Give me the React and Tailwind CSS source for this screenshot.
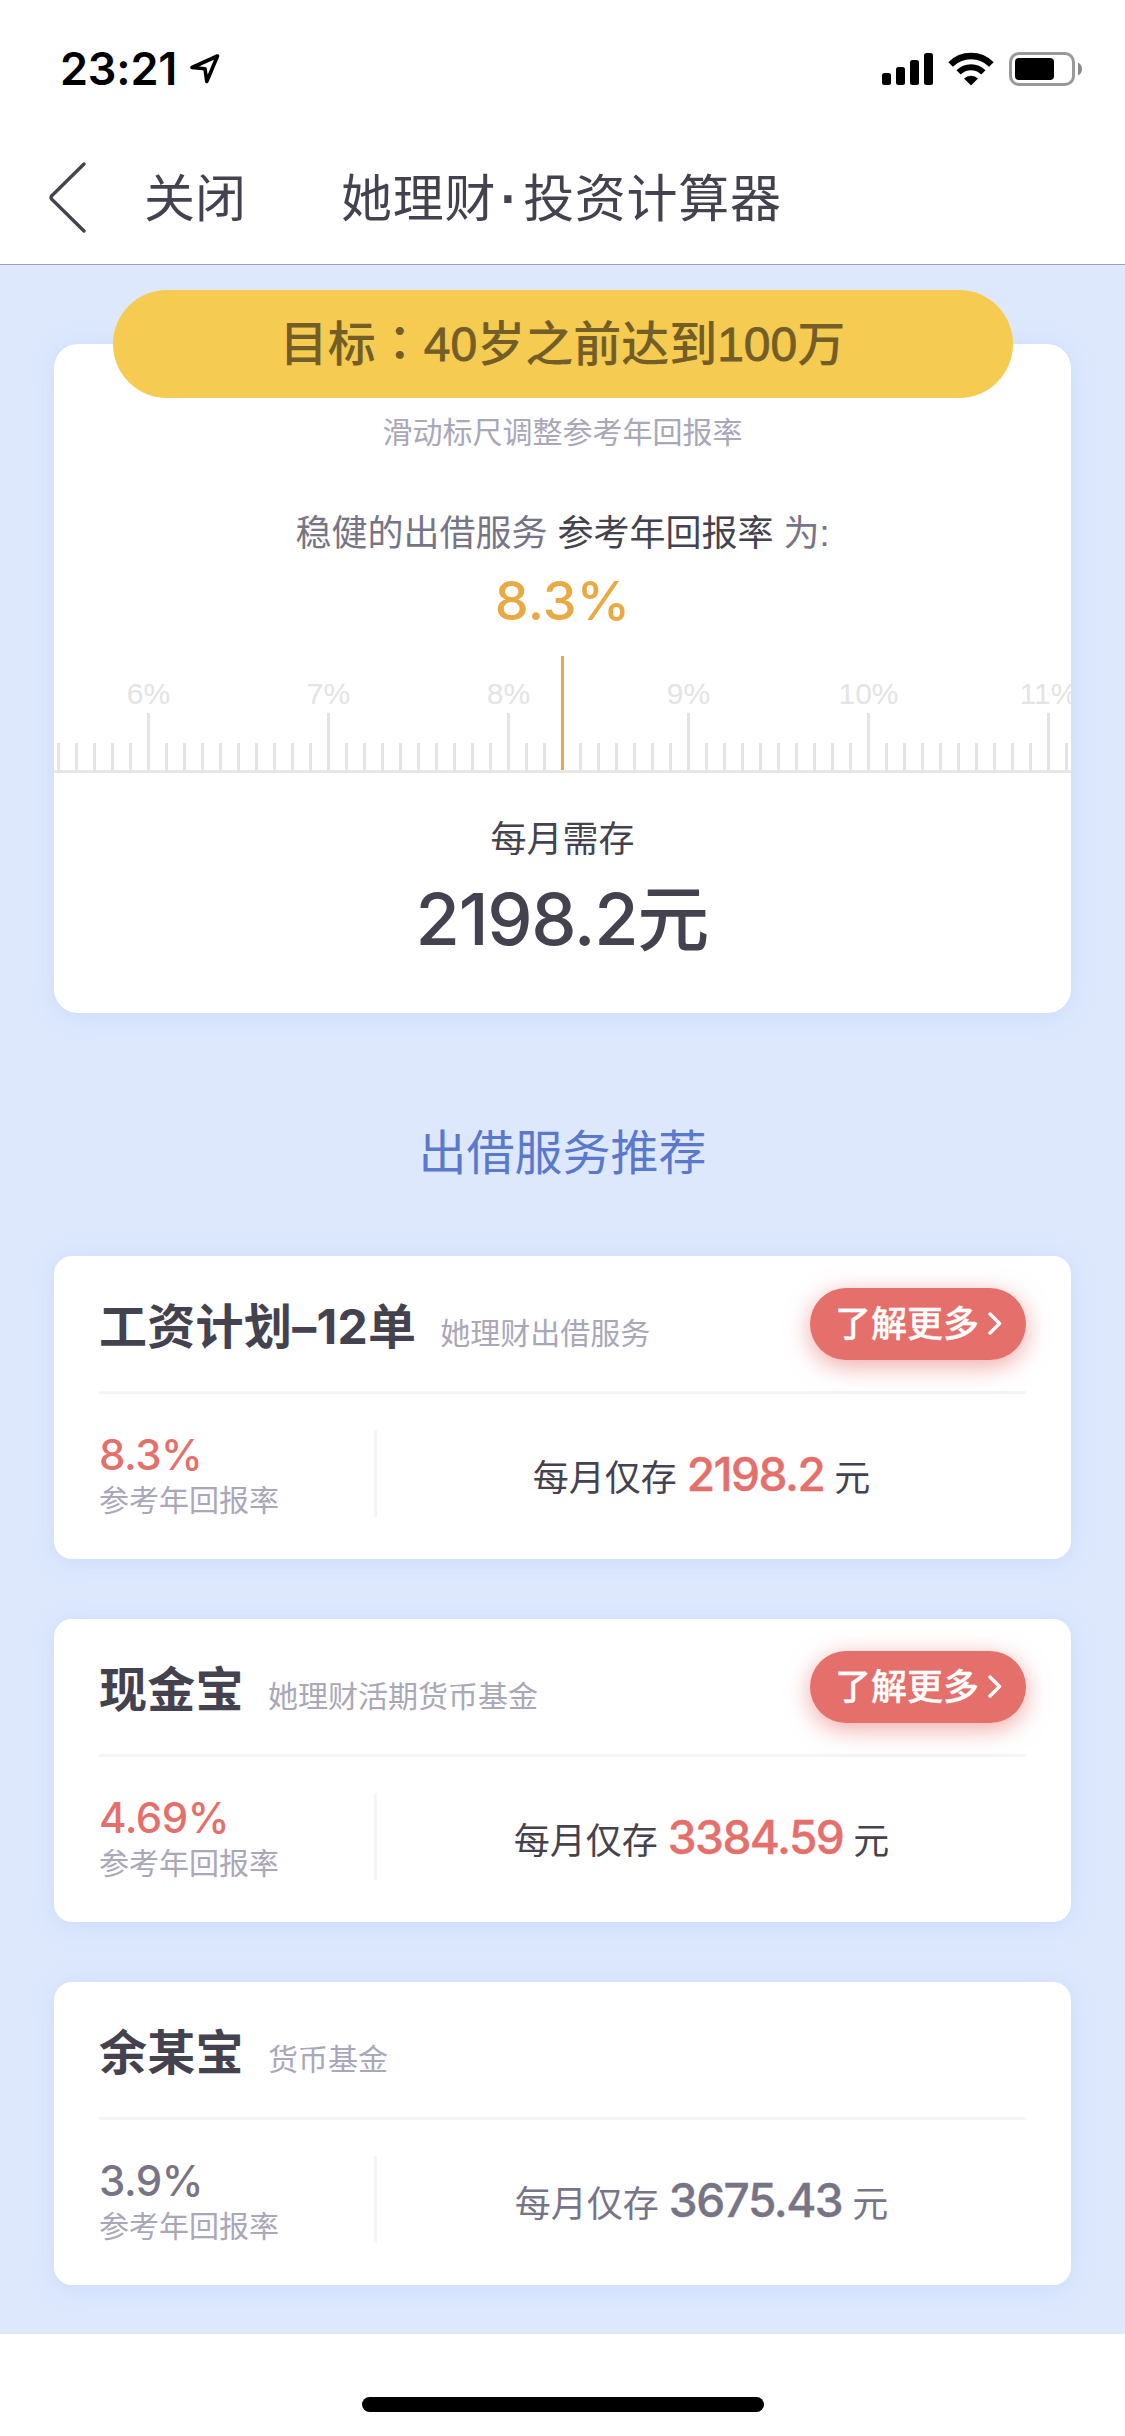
import React from "react";
import clsx from "clsx";

const plans = [
  {
    name: "工资计划–12单",
    desc: "她理财出借服务",
    rate: "8.3%",
    amount: "2198.2",
    active: true,
  },
  {
    name: "现金宝",
    desc: "她理财活期货币基金",
    rate: "4.69%",
    amount: "3384.59",
    active: true,
  },
  {
    name: "余某宝",
    desc: "货币基金",
    rate: "3.9%",
    amount: "3675.43",
    active: false,
  },
];

// one tick per 0.1%, starting at 5.5%
const ticks = Array.from({ length: 57 }, (_, i) => 55 + i);
const current = 83;

function StatusBar() {
  return (
    <div className="flex h-[138px] items-center justify-between pr-[43px] pl-[60px] text-black">
      <div className="flex items-center">
        <span className="w-[129px] font-['Inter',sans-serif] text-[45px] leading-[50px] font-semibold tracking-[-0.2px]">
          23:21
        </span>
        <svg width="32" height="32" viewBox="0 0 32 32" fill="none">
          <path
            d="M28.5 3 L3 14.5 L16 15.8 L17.8 28.5 Z"
            stroke="currentColor"
            strokeWidth="3.6"
            strokeLinejoin="round"
          />
        </svg>
      </div>
      <div className="flex items-center gap-[15px]">
        <svg width="51" height="32" viewBox="0 0 51 32" fill="currentColor">
          <rect x="0" y="20" width="9" height="12" rx="2.5" />
          <rect x="14" y="14" width="9" height="18" rx="2.5" />
          <rect x="28" y="7" width="9" height="25" rx="2.5" />
          <rect x="42" y="0" width="9" height="32" rx="2.5" />
        </svg>
        <svg width="46" height="34" viewBox="0 0 46 34" fill="none" stroke="currentColor">
          <path d="M2.6 12.4 A28.8 28.8 0 0 1 43.4 12.4" strokeWidth="6.4" />
          <path d="M10.6 20.4 A17.5 17.5 0 0 1 35.4 20.4" strokeWidth="6" />
          <path d="M23 33.5 L16 26.6 A10 10 0 0 1 30 26.6 Z" fill="currentColor" stroke="none" />
        </svg>
        <svg width="73" height="34" viewBox="0 0 73 34" fill="none">
          <rect x="1.5" y="1.5" width="63" height="31" rx="8.5" stroke="#999999" strokeWidth="3" />
          <rect x="6" y="6" width="39" height="22" rx="4" fill="currentColor" />
          <path d="M69 10.5 Q73 12.5 73 17 Q73 21.5 69 23.5 Z" fill="#8a8a8a" />
        </svg>
      </div>
    </div>
  );
}

function NavBar() {
  return (
    <div className="flex h-[127px] items-start border-b border-[#9aa3b4] pt-[23px] pl-[48px] text-[51px] leading-[78px] text-[#45424f]">
      <svg width="40" height="74" viewBox="0 0 40 74" fill="none" className="mt-px">
        <path
          d="M36 2 L3.5 34 Q2.6 35.5 3.5 37 L36 69"
          stroke="currentColor"
          strokeWidth="3.4"
          strokeLinecap="round"
        />
      </svg>
      <button className="ml-[56px]">关闭</button>
      <h1 className="ml-[95px] tracking-[0.7px]">
        她理财<span className="inline-block w-[27px] text-center font-bold">·</span>投资计算器
      </h1>
    </div>
  );
}

function Ruler() {
  return (
    <div className="mt-[23px] flex h-[117px] items-end gap-[15px] overflow-hidden border-b-[3px] border-[#e7e7e7] pl-[3px]">
      {ticks.map((t) => {
        const major = t % 10 === 0;
        return (
          <div
            key={t}
            className={clsx(
              "flex w-[3px] shrink-0 flex-col items-center",
              t === current ? "h-full bg-[#e9a943]" : "bg-[#e4e4e4]",
              t !== current && (major ? "h-[57px]" : "h-[27px]")
            )}
          >
            {major && (
              <span className="-mt-[34px] text-[30px] leading-[30px] whitespace-nowrap text-[#e4e4e4]">
                {t / 10}%
              </span>
            )}
          </div>
        );
      })}
    </div>
  );
}

function CalculatorCard() {
  return (
    <section className="mt-[79px] h-[669px] rounded-[24px] bg-white text-center shadow-[0_3px_24px_#c9dbfb]">
      <div className="flow-root">
        <div className="mx-auto -mt-[54px] h-[108px] w-[900px] rounded-full bg-[#f5cb52] text-[48px] leading-[100px] font-medium text-[#725e26]">
          目标
          <span lang="zh-TW" className="font-['Noto_Sans_CJK_TC',sans-serif]">
            ：
          </span>
          <span className="[-webkit-text-stroke:0.8px]">40</span>岁之前达到
          <span className="[-webkit-text-stroke:0.8px]">100</span>万
        </div>
      </div>
      <p className="mt-[13px] text-[30px] leading-[43px] text-[#a9a7b8]">滑动标尺调整参考年回报率</p>
      <p className="mt-[54px] text-[36px] leading-[51px] text-[#777585]">
        稳健的出借服务 <span className="text-[#45424f]">参考年回报率</span> 为:
      </p>
      <p className="mt-[10px] font-['Inter',sans-serif] text-[54px] leading-[64px] font-medium text-[#e9a943]">
        8.3%
      </p>
      <Ruler />
      <p className="mt-[41px] text-[36px] leading-[51px] text-[#45424f]">每月需存</p>
      <p className="mt-[9px] font-['Inter','Noto_Sans_CJK_SC',sans-serif] text-[72px] leading-[90px] font-medium text-[#45424f]">
        <span className="tracking-[-1.3px]">2198.2</span>元
      </p>
    </section>
  );
}

function PlanCard({ plan }) {
  return (
    <section className="h-[303px] rounded-[18px] bg-white px-[45px] pt-8 shadow-[0_3px_24px_#c9dbfb]">
      <div className="flex h-[106px] items-start justify-between border-b-[3px] border-[#f5f5f6]">
        <div className="flex items-baseline gap-[24px] pt-[3px]">
          <h3 className="font-['Inter','Noto_Sans_CJK_SC',sans-serif] text-[48px] leading-[72px] font-bold tracking-[0.3px] text-[#45424f]">
            {plan.name}
          </h3>
          <span className="text-[30px] text-[#a9a7b8]">{plan.desc}</span>
        </div>
        {plan.active && (
          <button className="flex h-[72px] w-[216px] items-center rounded-full bg-[#e46f6b] pl-[25px] text-[36px] leading-[73px] font-medium text-white shadow-[0_6px_24px_#e46f6b99]">
            <span className="[-webkit-text-stroke:0.3px]">了解更多</span>
            <svg width="16" height="24" viewBox="0 0 16 24" fill="none" className="ml-[8px]">
              <path
                d="M3 2 L12.5 11.5 L3 21"
                stroke="currentColor"
                strokeWidth="3.4"
                strokeLinecap="round"
                strokeLinejoin="round"
              />
            </svg>
          </button>
        )}
      </div>
      <div className="mt-9 flex h-[87px]">
        <div className="w-[278px] border-r-[3px] border-[#f5f5f6]">
          <p
            className={clsx(
              "font-['Inter',sans-serif] text-[42px] leading-[50px] font-medium tracking-[-0.5px]",
              plan.active ? "text-[#e46f6b]" : "text-[#777585]"
            )}
          >
            {plan.rate}
          </p>
          <p className="text-[30px] leading-[42px] text-[#a9a7b8]">参考年回报率</p>
        </div>
        <p
          className={clsx(
            "flex-1 pt-[19px] text-center text-[36px] leading-[50px]",
            plan.active ? "text-[#45424f]" : "text-[#777585]"
          )}
        >
          每月仅存{" "}
          <span
            className={clsx(
              "font-['Inter',sans-serif] text-[46px] font-medium tracking-[-1.5px] [-webkit-text-stroke:0.4px]",
              plan.active && "text-[#e46f6b]"
            )}
          >
            {plan.amount}
          </span>{" "}
          元
        </p>
      </div>
    </section>
  );
}

export default function App() {
  return (
    <div
      lang="zh-CN"
      className="flex h-[2436px] w-[1125px] flex-col overflow-hidden bg-white font-['Liberation_Sans','Noto_Sans_CJK_SC',sans-serif]"
    >
      <StatusBar />
      <NavBar />
      <main className="flow-root h-[2069px] bg-[#dde8fd] px-[54px]">
        <CalculatorCard />
        <h2 className="mt-[105px] text-center text-[48px] leading-[71px] text-[#5b79cc]">出借服务推荐</h2>
        <div className="mt-[67px] flex flex-col gap-[60px]">
          {plans.map((plan) => (
            <PlanCard key={plan.name} plan={plan} />
          ))}
        </div>
      </main>
      <footer className="flex flex-1 justify-center pt-[63px]">
        <div className="h-[15px] w-[402px] rounded-full bg-black" />
      </footer>
    </div>
  );
}
